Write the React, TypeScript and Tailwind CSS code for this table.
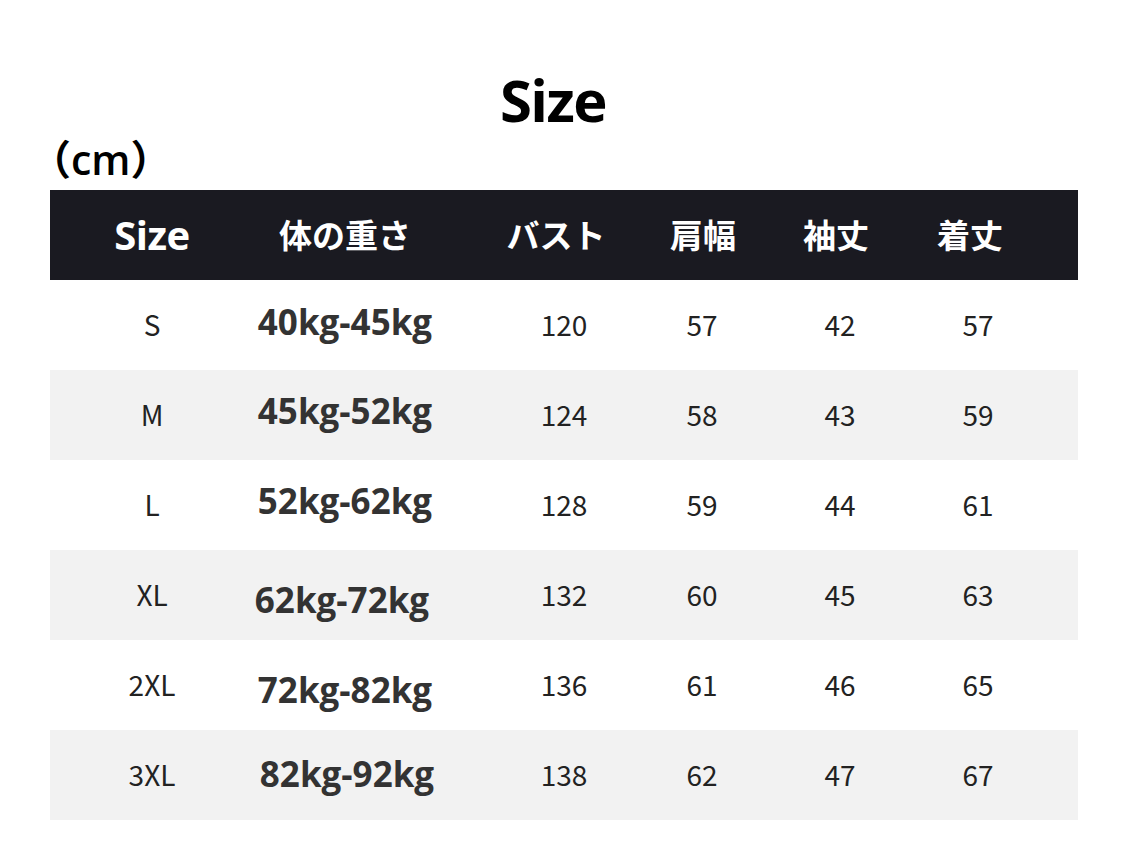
import React from "react";

const rows = [
  { s: "S", w: "40kg-45kg", v: ["120", "57", "42", "57"], wy: "mt-[-6px]", wx: "ml-0" },
  { s: "M", w: "45kg-52kg", v: ["124", "58", "43", "59"], wy: "mt-[-8px]", wx: "ml-0" },
  { s: "L", w: "52kg-62kg", v: ["128", "59", "44", "61"], wy: "mt-[-8px]", wx: "ml-0" },
  { s: "XL", w: "62kg-72kg", v: ["132", "60", "45", "63"], wy: "mt-[10px]", wx: "ml-[-6px]" },
  { s: "2XL", w: "72kg-82kg", v: ["136", "61", "46", "65"], wy: "mt-[10px]", wx: "ml-0" },
  { s: "3XL", w: "82kg-92kg", v: ["138", "62", "47", "67"], wy: "mt-[-2px]", wx: "ml-[4px]" },
];

const jp = "font-['Noto_Sans_CJK_JP',sans-serif]";

export default function App() {
  return (
    <div className="w-[1125px] h-[866px] bg-white text-[#333] font-['Open_Sans','Noto_Sans_CJK_JP',sans-serif]">
      <div className="pt-[62px] flex justify-center">
        <h1 className="text-[58px] leading-[76px] font-bold text-black tracking-[-1.5px] pr-[19px]">Size</h1>
      </div>
      <div className="pl-[30px] h-[52px] text-[41px] leading-[42px] font-semibold text-black">（cm）</div>
      <div className="ml-[50px] w-[1028px]">
        <div className="h-[90px] bg-[#1a1a21] flex items-center text-white font-bold">
          <div className="w-[204px] text-center text-[40px] tracking-[-0.5px]">Size</div>
          <div className={`w-[241px] pr-[59px] text-center text-[33px] ${jp}`}>体の重さ</div>
          <div className={`w-[122px] text-center text-[33px] ${jp}`}>バスト</div>
          <div className={`w-[172px] text-center text-[33px] ${jp}`}>肩幅</div>
          <div className={`w-[94px] text-center text-[33px] ${jp}`}>袖丈</div>
          <div className={`w-[174px] text-center text-[33px] ${jp}`}>着丈</div>
        </div>
        {rows.map((r, i) => (
          <div key={r.s} className={`h-[90px] flex items-center ${i % 2 === 1 ? "bg-[#f2f2f2]" : "bg-white"}`}>
            <div className={`w-[204px] text-center text-[28px] text-[#222] mt-[-3px] ${jp}`}>{r.s}</div>
            <div className={`w-[241px] pr-[59px] text-center text-[35px] font-bold text-[#333] ${r.wy}`}>
              <span className={`inline-block ${r.wx}`}>{r.w}</span>
            </div>
            {r.v.map((n, j) => (
              <div key={j} className={`w-[138px] text-center text-[28px] text-[#222] mt-[-3px] ${jp}`}>{n}</div>
            ))}
          </div>
        ))}
      </div>
    </div>
  );
}
